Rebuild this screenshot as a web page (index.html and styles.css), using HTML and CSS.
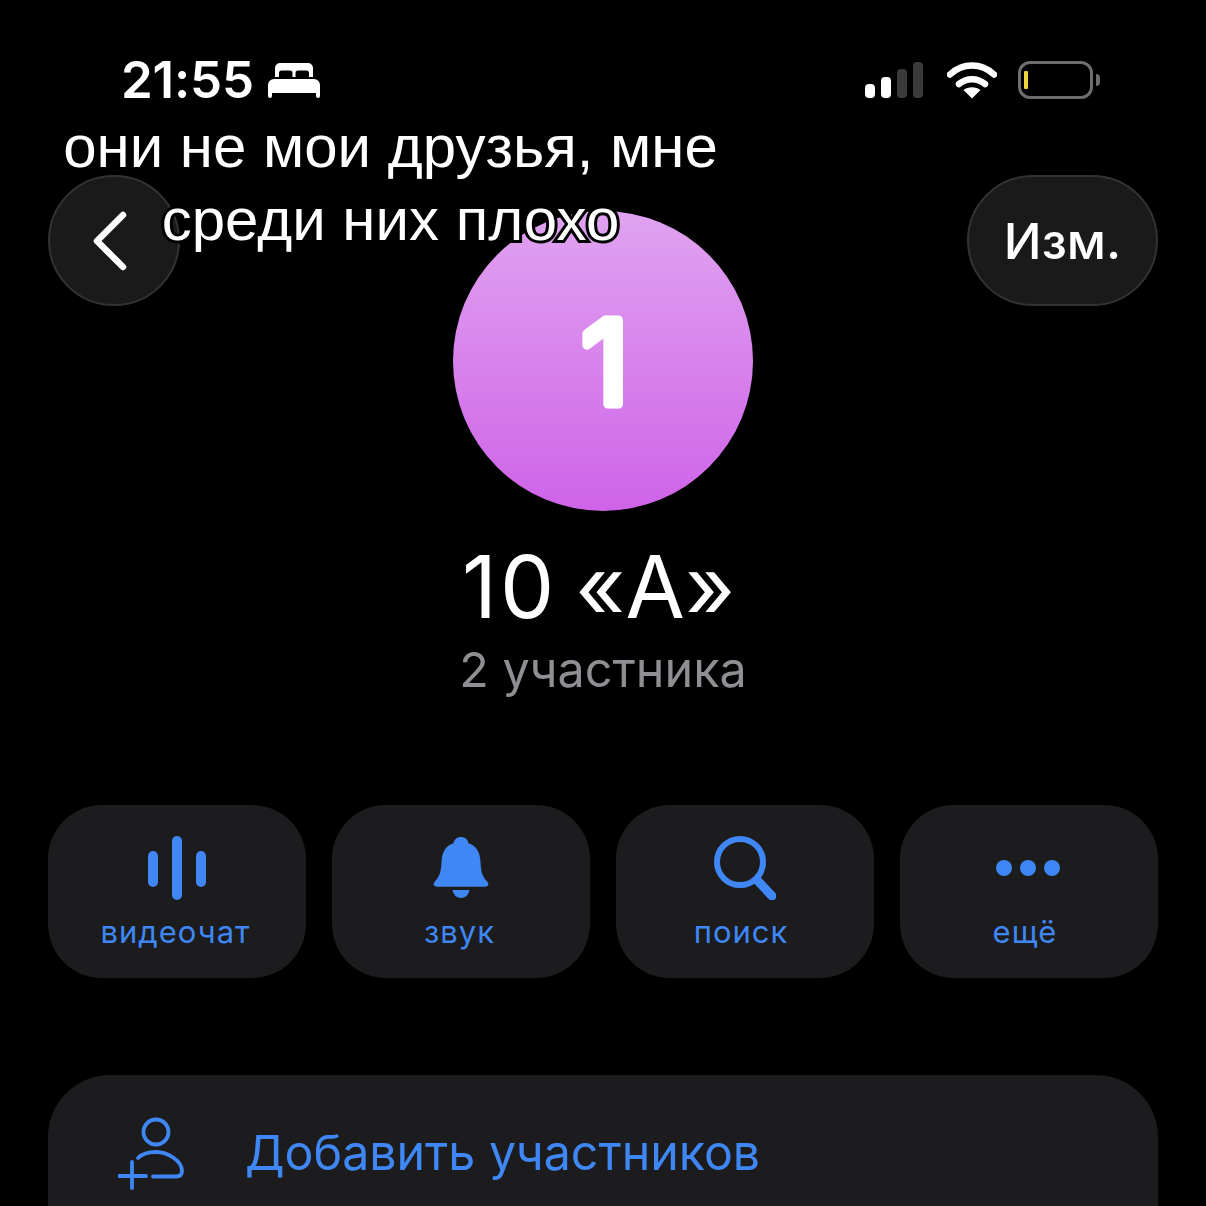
FILE: index.html
```html
<!DOCTYPE html>
<html lang="ru">
<head>
  <meta charset="UTF-8">
  <title>10 «А»</title>
  <link rel="stylesheet" href="styles.css">
</head>
<body>

  <div class="page">
    <div class="status">
      <div class="status-left">
        <span class="time">21:55</span>
        <svg class="bed" width="52" height="36" viewBox="0 0 52 36">
          <path d="M7 15V6a5 5 0 0 1 5-5h28a5 5 0 0 1 5 5v9h-4V11a2.500 2.500 0 0 0-2.500-2.500H30a2.500 2.500 0 0 0-2.500 2.500v4h-3v-4A2.500 2.500 0 0 0 22 8.500H13.500A2.500 2.500 0 0 0 11 11v4z" fill="#fff"/>
          <path d="M6 17h40a6 6 0 0 1 6 6v11a2 2 0 0 1-4 0v-3H4v3a2 2 0 0 1-4 0V23a6 6 0 0 1 6-6z" fill="#fff"/>
        </svg>
      </div>
      <div class="status-right">
        <div class="signal">
          <span class="bar bar-1"></span>
          <span class="bar bar-2"></span>
          <span class="bar bar-3"></span>
          <span class="bar bar-4"></span>
        </div>
        <svg class="wifi" width="50" height="38" viewBox="0 0 50 38">
          <path d="M3 13.500C15.500 1.500 34.500 1.500 47 13.500" fill="none" stroke="#fff" stroke-width="6.500" stroke-linecap="round"/>
          <path d="M12 23c7.500-6.500 18.500-6.500 26 0" fill="none" stroke="#fff" stroke-width="6.500" stroke-linecap="round"/>
          <path d="M25 37.500l-8.500-8.500c4.800-3.600 12.200-3.600 17 0z" fill="#fff"/>
        </svg>
        <div class="battery">
          <div class="battery-body"><span class="battery-level"></span></div>
          <span class="battery-nub"></span>
        </div>
      </div>
    </div>

    <div class="header">
      <button class="round-btn back-btn">
        <svg width="36" height="60" viewBox="0 0 36 60">
          <path d="M31 4L5 30l26 26" fill="none" stroke="#fff" stroke-width="6.500" stroke-linecap="round" stroke-linejoin="round"/>
        </svg>
      </button>
      <div class="avatar">
        <svg width="300" height="300" viewBox="0 0 300 300">
          <text class="avatar-num" x="152" y="193" text-anchor="middle">1</text>
        </svg>
      </div>
      <button class="round-btn edit-btn">Изм.</button>
    </div>

    <div class="group-title">10 «А»</div>
    <div class="group-sub">2 участника</div>

    <div class="actions">
      <div class="action">
        <svg class="action-icon" width="60" height="64" viewBox="0 0 60 64">
          <rect x="1" y="15" width="10" height="36" rx="5"/>
          <rect x="25" y="0" width="10" height="64" rx="5"/>
          <rect x="49" y="15" width="10" height="36" rx="5"/>
        </svg>
        <span class="action-label">видеочат</span>
      </div>
      <div class="action">
        <svg class="action-icon" width="56" height="64" viewBox="0 0 56 64">
          <path d="M28 1c4 0 7 2.600 7.500 6.300C44 10 47 17 47.500 26c.5 10 1.800 14.500 6.800 19.700 1.800 1.900 1.300 5-2 5H3.700c-3.300 0-3.800-3.100-2-5C6.700 40.500 8 36 8.500 26 9 17 12 10 20.500 7.300 21 3.600 24 1 28 1z"/>
          <path d="M19.500 54h17c-1 5-4.300 8-8.500 8s-7.500-3-8.500-8z"/>
        </svg>
        <span class="action-label">звук</span>
      </div>
      <div class="action">
        <svg class="action-icon" width="62" height="64" viewBox="0 0 62 64">
          <circle cx="26" cy="26" r="23" fill="none" stroke="#3f87f5" stroke-width="6"/>
          <path d="M43 44l15 16" fill="none" stroke="#3f87f5" stroke-width="9" stroke-linecap="round"/>
        </svg>
        <span class="action-label label-left">поиск</span>
      </div>
      <div class="action">
        <svg class="action-icon dots" width="64" height="64" viewBox="0 0 64 64">
          <circle cx="8" cy="32" r="8"/>
          <circle cx="32" cy="32" r="8"/>
          <circle cx="56" cy="32" r="8"/>
        </svg>
        <span class="action-label label-left">ещё</span>
      </div>
    </div>

    <div class="card">
      <div class="card-row">
        <svg class="add-icon" width="68" height="74" viewBox="0 0 68 74">
          <circle cx="38" cy="16" r="12.500" fill="none" stroke="#3f87f5" stroke-width="3.800"/>
          <path d="M20 42c4-4 11-6 18-6 12 0 26 9 26 19 0 4-2 5.500-6 5.500H35" fill="none" stroke="#3f87f5" stroke-width="3.800" stroke-linecap="round"/>
          <path d="M14 46v26M1 60h27" fill="none" stroke="#3f87f5" stroke-width="3.800" stroke-linecap="round"/>
        </svg>
        <span class="card-label">Добавить участников</span>
      </div>
    </div>

    <div class="caption">они не мои друзья, мне<br>среди них плохо</div>
  </div>

</body>
</html>
```

FILE: styles.css
```css
html, body {
  margin: 0;
  background: #000;
}

.page {
  position: relative;
  height: 100vh;
  overflow: hidden;
  padding: 0 48px;
  box-sizing: border-box;
  font-family: Inter, Roboto, sans-serif;
  color: #fff;
}

/* status bar */
.status {
  display: flex;
  justify-content: space-between;
  align-items: center;
  height: 38px;
  padding: 61px 58px 0 73px;
}

.status-left {
  display: flex;
  align-items: center;
  gap: 14px;
}

.time {
  font-size: 51px;
  font-weight: 600;
  line-height: 38px;
  letter-spacing: -0.2px;
}

.status-right {
  display: flex;
  align-items: center;
  gap: 24px;
}

.signal {
  display: flex;
  align-items: flex-end;
  gap: 6px;
  height: 36px;
}

.bar {
  width: 10px;
  border-radius: 4px;
  background: #fff;
}

.bar-1 { height: 14px; }
.bar-2 { height: 21px; }
.bar-3 { height: 29px; background: #3a3a3c; }
.bar-4 { height: 36px; background: #3a3a3c; }

.wifi {
  margin-right: -3px;
}

.battery {
  display: flex;
  align-items: center;
  gap: 3px;
}

.battery-body {
  display: flex;
  align-items: center;
  box-sizing: border-box;
  width: 75px;
  height: 38px;
  padding-left: 3px;
  border: 3px solid #6e6e70;
  border-radius: 12px;
}

.battery-level {
  width: 4px;
  height: 18px;
  background: #f2d33d;
  border-radius: 1px;
}

.battery-nub {
  width: 4px;
  height: 12px;
  background: #6e6e70;
  border-radius: 0 6px 6px 0;
}

.header {
  display: grid;
  grid-template-columns: 191px 1fr 191px;
  align-items: start;
  margin-top: 76px;
}

.round-btn {
  display: flex;
  align-items: center;
  justify-content: center;
  height: 131px;
  padding: 0;
  background: #1a1a1b;
  border: 2px solid #333335;
  border-radius: 66px;
  color: #fff;
  font-family: Inter, Roboto, sans-serif;
  font-size: 50px;
  font-weight: 500;
}

.back-btn {
  width: 132px;
}

.back-btn svg {
  margin-right: 8px;
}

.edit-btn {
  width: 191px;
}

.avatar {
  justify-self: center;
  width: 300px;
  height: 300px;
  margin-top: 36px;
  border-radius: 50%;
  background: linear-gradient(to bottom, #e0a3f0, #cf63e8);
}

.avatar-num {
  font-family: Inter, Roboto, sans-serif;
  font-size: 116px;
  font-weight: 400;
  fill: #fff;
  stroke: #fff;
  stroke-width: 9px;
  stroke-linejoin: round;
}

.group-title {
  margin-top: 31px;
  padding-right: 6px;
  font-size: 86px;
  letter-spacing: 3px;
  word-spacing: -9px;
  line-height: 90px;
  text-align: center;
}

.group-sub {
  margin-top: 8px;
  font-size: 48.500px;
  line-height: 60px;
  color: #8e8e93;
  text-align: center;
}

.actions {
  display: grid;
  grid-template-columns: repeat(4, 1fr);
  gap: 26px;
  margin-top: 105px;
}

.action {
  display: flex;
  flex-direction: column;
  align-items: center;
  box-sizing: border-box;
  height: 173px;
  padding-top: 31px;
  background: #1c1c1e;
  border-radius: 54px;
  color: #3f87f5;
  font-size: 31px;
  letter-spacing: 1px;
  line-height: 40px;
}

.action-icon {
  margin-bottom: 12px;
  fill: #3f87f5;
}

.action-label {
  padding-right: 3px;
}

.label-left {
  padding-right: 8px;
}

.dots {
  margin-right: 3px;
}

.card {
  margin-top: 97px;
  height: 300px;
  background: #1c1c1e;
  border-radius: 62px;
}

.card-row {
  display: flex;
  align-items: center;
  gap: 59px;
  padding: 41px 0 0 70px;
}

.card-label {
  font-size: 48.300px;
  line-height: 74px;
  color: #3f87f5;
}

/* sticker text laid over the screenshot */
.caption {
  position: absolute;
  top: 110px;
  left: 0;
  width: 781px;
  font-family: "Liberation Sans", Arial, sans-serif;
  font-size: 60px;
  line-height: 73px;
  text-align: center;
  color: #fff;
  -webkit-text-stroke: 6px #000;
  paint-order: stroke fill;
}
```
